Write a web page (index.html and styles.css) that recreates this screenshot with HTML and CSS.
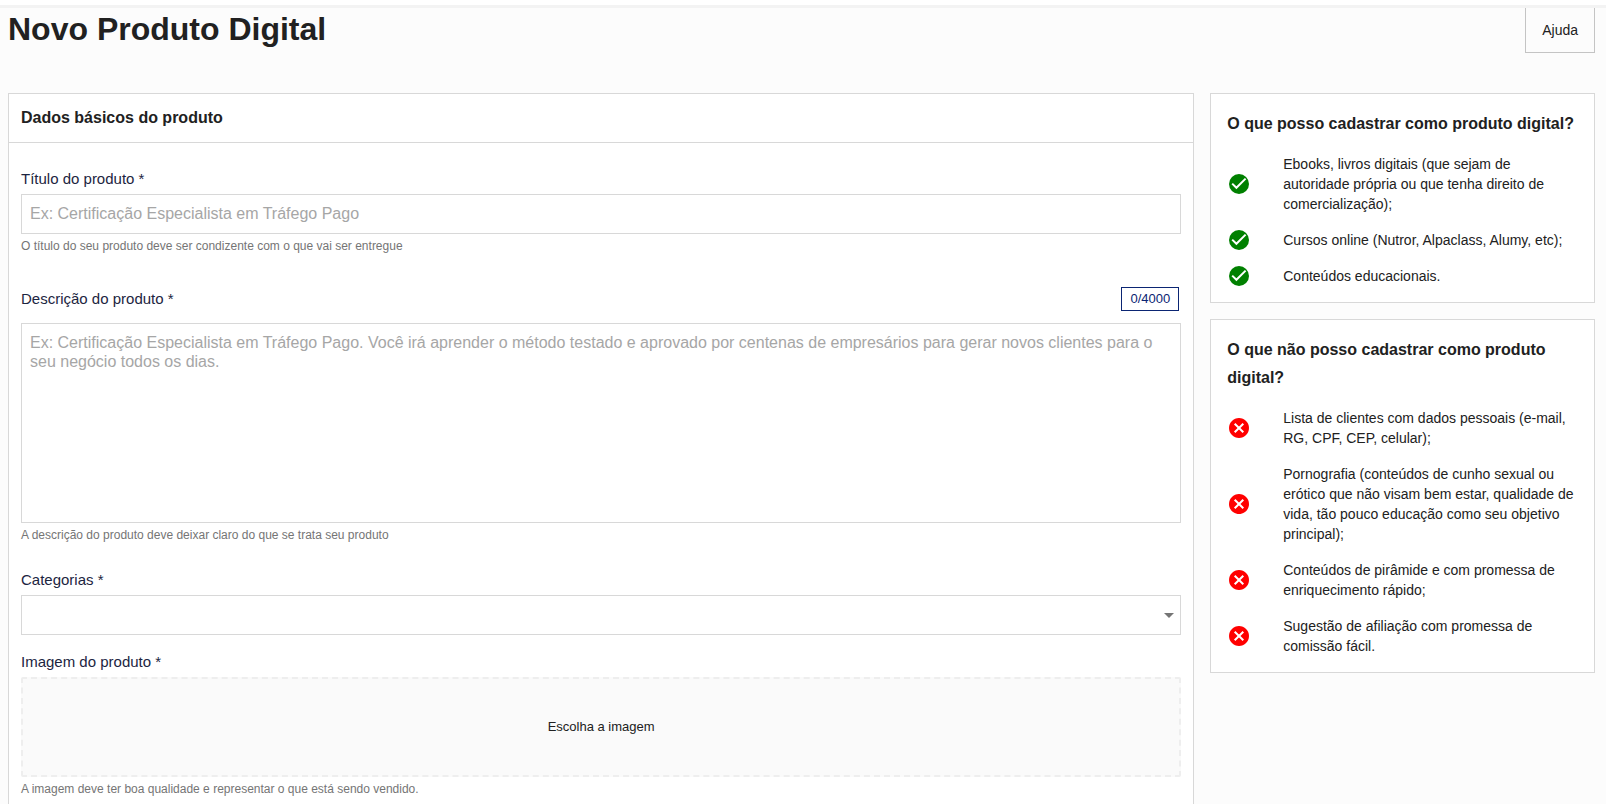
FILE: index.html
```html
<!DOCTYPE html>
<html lang="pt-BR">
<head>
    <meta charset="UTF-8">
    <meta name="viewport" content="width=device-width, initial-scale=1.0">
    <title>Novo Produto Digital</title>
    <link rel="stylesheet" href="styles.css">
</head>
<body>
    <svg class="sprite" aria-hidden="true">
        <symbol id="check" viewBox="0 0 24 24">
            <circle cx="12" cy="12" r="10"/>
            <path d="M5.2 11.6l4.2 4.2 9.2-9.2" fill="none" stroke="#fff" stroke-width="2"/>
        </symbol>
        <symbol id="cancel" viewBox="0 0 24 24">
            <path d="M12 2C6.47 2 2 6.47 2 12s4.47 10 10 10 10-4.47 10-10S17.53 2 12 2z"/>
            <path d="M7.7 7.7l8.6 8.6M16.3 7.7l-8.6 8.6" stroke="#fff" stroke-width="2"/>
        </symbol>
    </svg>
    <div class="topbar"></div>
    <header class="page-header">
        <h1>Novo Produto Digital</h1>
        <button type="button" class="help">Ajuda</button>
    </header>
    <div class="content">
        <main class="card form-card">
            <h2 class="card-title">Dados básicos do produto</h2>
            <form class="form">
                <div class="field field-title">
                    <label for="titulo">Título do produto *</label>
                    <input type="text" id="titulo" class="control" placeholder="Ex: Certificação Especialista em Tráfego Pago">
                    <p class="helper">O título do seu produto deve ser condizente com o que vai ser entregue</p>
                </div>
                <div class="field field-description">
                    <div class="label-row">
                        <label for="descricao">Descrição do produto *</label>
                        <span class="counter" id="contador">0/4000</span>
                    </div>
                    <textarea id="descricao" class="control" maxlength="4000" placeholder="Ex: Certificação Especialista em Tráfego Pago. Você irá aprender o método testado e aprovado por centenas de empresários para gerar novos clientes para o seu negócio todos os dias."></textarea>
                    <p class="helper">A descrição do produto deve deixar claro do que se trata seu produto</p>
                </div>
                <div class="field field-category">
                    <label for="categorias">Categorias *</label>
                    <div class="select">
                        <select id="categorias" class="control">
                            <option value=""></option>
                        </select>
                        <svg class="arrow" viewBox="0 0 10 5"><path d="M0 0h10L5 5z"/></svg>
                    </div>
                </div>
                <div class="field">
                    <label for="imagem">Imagem do produto *</label>
                    <button type="button" id="imagem" class="dropzone">Escolha a imagem</button>
                    <p class="helper">A imagem deve ter boa qualidade e representar o que está sendo vendido.</p>
                </div>
            </form>
        </main>
        <aside class="sidebar">
            <section class="card info">
                <h2>O que posso cadastrar como produto digital?</h2>
                <ul class="allowed">
                    <li><svg class="icon"><use href="#check"/></svg><span>Ebooks, livros digitais (que sejam de autoridade própria ou que tenha direito de comercialização);</span></li>
                    <li><svg class="icon"><use href="#check"/></svg><span>Cursos online (Nutror, Alpaclass, Alumy, etc);</span></li>
                    <li><svg class="icon"><use href="#check"/></svg><span>Conteúdos educacionais.</span></li>
                </ul>
            </section>
            <section class="card info">
                <h2>O que não posso cadastrar como produto digital?</h2>
                <ul class="denied">
                    <li><svg class="icon"><use href="#cancel"/></svg><span>Lista de clientes com dados pessoais (e-mail, RG, CPF, CEP, celular);</span></li>
                    <li><svg class="icon"><use href="#cancel"/></svg><span>Pornografia (conteúdos de cunho sexual ou erótico que não visam bem estar, qualidade de vida, tão pouco educação como seu objetivo principal);</span></li>
                    <li><svg class="icon"><use href="#cancel"/></svg><span>Conteúdos de pirâmide e com promessa de enriquecimento rápido;</span></li>
                    <li><svg class="icon"><use href="#cancel"/></svg><span>Sugestão de afiliação com promessa de comissão fácil.</span></li>
                </ul>
            </section>
        </aside>
    </div>
</body>
</html>
```
FILE: styles.css
```css
* {
    box-sizing: border-box;
}
html {
    scrollbar-width: none;
}
body {
    margin: 0;
    background: #fcfcfc;
    color: #212121;
    font-family: "Liberation Sans", Arial, sans-serif;
    font-size: 14px;
}
h1, h2, p, ul {
    margin: 0;
    padding: 0;
}
button, input, textarea, select {
    font-family: inherit;
}
.sprite {
    display: none;
}
.topbar {
    height: 8px;
    background: #fff;
    border-bottom: 3px solid #f3f3f3;
}
.page-header {
    display: flex;
    justify-content: space-between;
    align-items: flex-start;
    padding: 0 11px 0 8px;
    margin-bottom: 40px;
}
h1 {
    font-size: 32px;
    line-height: 42px;
}
.help {
    height: 45px;
    padding: 0 16px;
    background: none;
    border: 1px solid #c4c4c4;
    border-top: 0;
    color: #212121;
    font-size: 14px;
    cursor: pointer;
}
.content {
    display: grid;
    grid-template-columns: repeat(12, 1fr);
    gap: 16px;
    padding: 0 11px 0 8px;
}
.card {
    background: #fff;
    border: 1px solid #d8d8d8;
}
.form-card {
    grid-column: span 9;
}
.card-title {
    padding: 0 12px;
    border-bottom: 1px solid #d8d8d8;
    font-size: 16px;
    line-height: 48px;
}
.form {
    padding: 25px 12px;
}
.field {
    display: flex;
    flex-direction: column;
}
.field-title {
    margin-bottom: 31px;
}
.field-description {
    margin-bottom: 24px;
}
.field-category {
    margin-bottom: 16px;
}
label {
    margin-bottom: 4px;
    color: #1c2541;
    font-size: 15px;
    line-height: 22px;
}
.label-row {
    display: flex;
    justify-content: space-between;
    align-items: center;
    height: 24px;
    margin-bottom: 12px;
    padding-right: 2px;
}
.label-row label {
    margin-bottom: 0;
}
.counter {
    padding: 0 8px;
    border: 1px solid #0b2573;
    color: #0b2573;
    font-size: 13px;
    line-height: 22px;
}
.control {
    width: 100%;
    height: 40px;
    padding: 0 8px;
    background: #fff;
    border: 1px solid #d8d8d8;
    border-radius: 0;
    color: #212121;
    font-size: 16px;
}
textarea.control {
    height: 200px;
    padding: 9px 8px;
    line-height: 19px;
    resize: none;
}
.control::placeholder {
    color: #a6a6a6;
}
.helper {
    margin-top: 2px;
    color: #757575;
    font-size: 12px;
    line-height: 20px;
}
.select {
    position: relative;
}
.select .control {
    display: block;
    appearance: none;
}
.arrow {
    position: absolute;
    top: 18px;
    right: 7px;
    width: 10px;
    height: 5px;
    fill: #757575;
    pointer-events: none;
}
.dropzone {
    height: 100px;
    padding: 0 8px 2px;
    background: #fafafa;
    border: 2px dashed #eee;
    border-radius: 2px;
    color: #212121;
    font-size: 13px;
    cursor: pointer;
}
.sidebar {
    grid-column: span 3;
    display: flex;
    flex-direction: column;
    gap: 16px;
}
.info {
    padding: 16px;
}
.info h2 {
    margin-bottom: 16px;
    font-size: 16px;
    line-height: 28px;
}
.info ul {
    display: flex;
    flex-direction: column;
    gap: 16px;
    list-style: none;
}
.info li {
    display: flex;
    align-items: center;
    gap: 32px;
    min-height: 20px;
    line-height: 20px;
}
.icon {
    flex: none;
    width: 24px;
    height: 24px;
    margin: -2px 0;
}
.allowed .icon {
    fill: green;
}
.denied .icon {
    fill: red;
}
```
